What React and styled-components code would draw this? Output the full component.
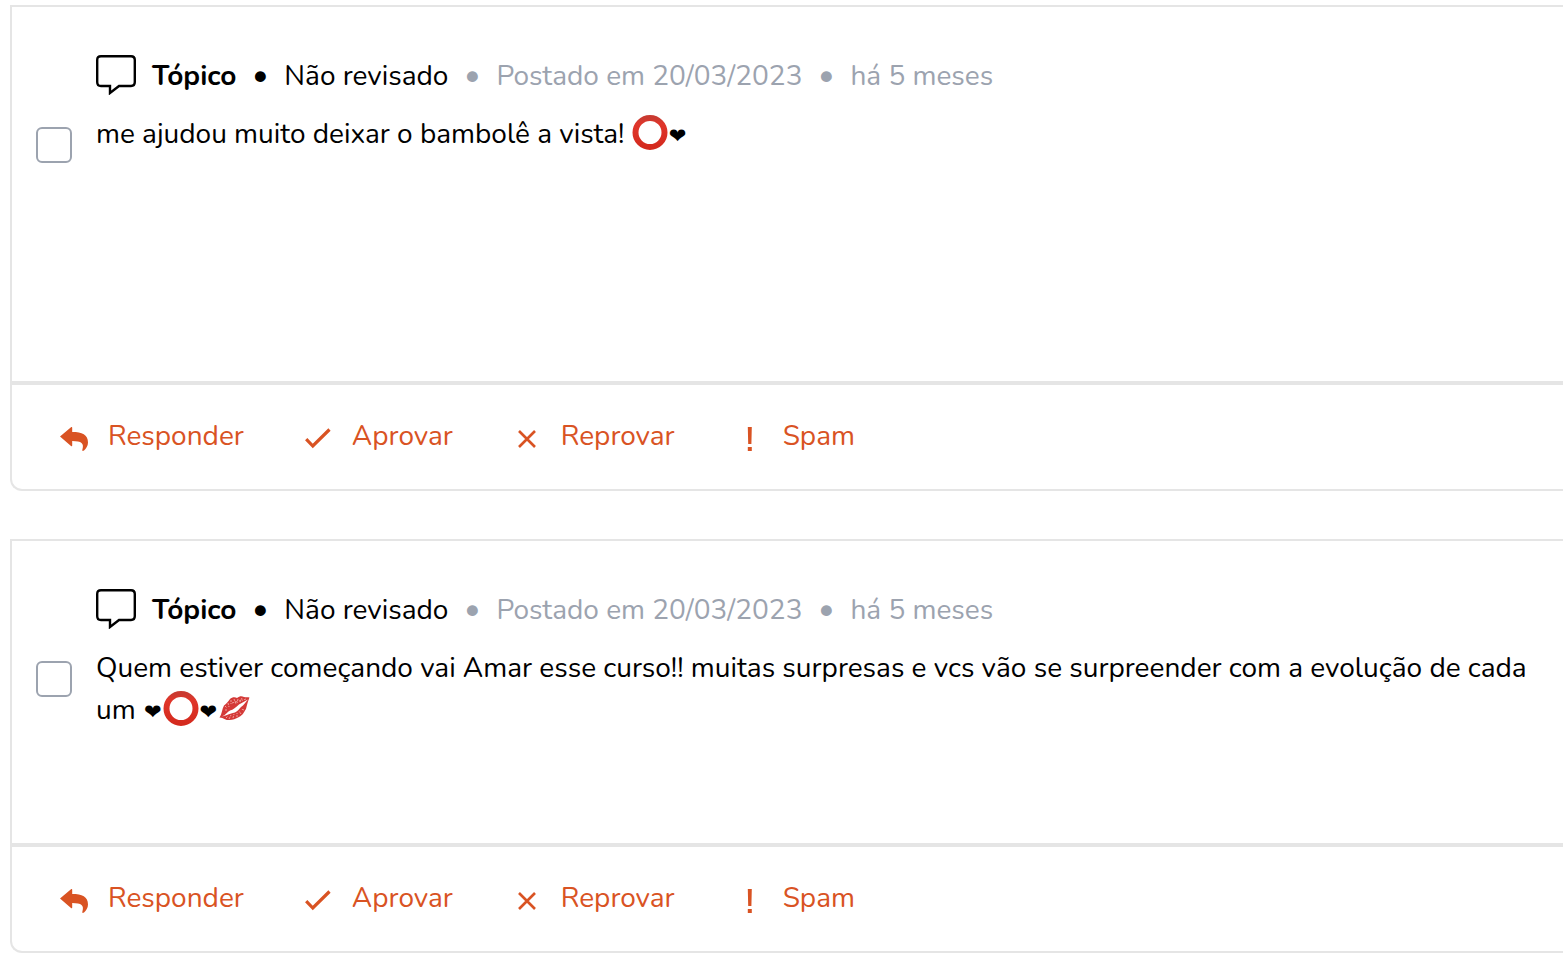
import React, { useState } from 'react';
import styled, { createGlobalStyle } from 'styled-components';

const GlobalStyle = createGlobalStyle`
  *, *::before, *::after {
    box-sizing: border-box;
  }

  body {
    margin: 0;
    background-color: #fff;
    color: #000;
    font-family: Nunito, Lato, 'Open Sans', sans-serif;
    font-size: 28px;
    line-height: 42px;
  }
`;

const List = styled.main`
  display: flex;
  flex-direction: column;
  gap: 48px;
  padding: 5px 0 9px 10px;
`;

const Card = styled.article`
  border: 2px solid #e5e5e5;
  border-right: none;
  border-bottom-left-radius: 12px;
`;

const CardBody = styled.div`
  display: flex;
  align-items: flex-start;
  gap: 24px;
  padding: 48px 24px 0;
  min-height: ${(props) => (props.$tall ? 374 : 302)}px;
`;

const Checkbox = styled.input`
  appearance: none;
  flex: none;
  width: 36px;
  height: 36px;
  margin: 72px 0 0;
  border: 2px solid #9ca3af;
  border-radius: 6px;
  background-color: #fff;
  cursor: pointer;

  &:checked {
    background-color: #d95323;
    border-color: #d95323;
  }
`;

const Content = styled.div`
  flex: 1;
  min-width: 0;
`;

const Meta = styled.div`
  display: flex;
  align-items: flex-start;
  margin-bottom: 16px;
`;

const TopicIcon = styled.svg`
  flex: none;
  width: 40px;
  height: 40px;
  margin-right: 16px;
`;

const Kind = styled.strong`
  font-weight: 700;
`;

const MetaText = styled.span`
  color: ${(props) => (props.$muted ? '#9ca3af' : '#000')};
`;

const Dot = styled.span`
  width: 48px;
  font-size: 30px;
  text-align: center;
  color: ${(props) => (props.$muted ? '#9ca3af' : '#000')};
`;

const Text = styled.p`
  margin: 0;
`;

const Heart = styled.span`
  display: inline-block;
  padding: 0 1px;
  font-family: 'DejaVu Sans', sans-serif;
  font-size: 21px;
  line-height: 24px;
`;

const Emoji = styled.svg`
  width: 36px;
  height: 36px;
  vertical-align: -8px;
`;

const Actions = styled.footer`
  display: flex;
  gap: 60px;
  padding: 30px 48px 32px;
  border-top: 4px solid #e5e5e5;
`;

const ActionButton = styled.button`
  display: flex;
  align-items: center;
  gap: 20px;
  padding: 0;
  border: none;
  background: none;
  color: #d95323;
  font: inherit;
  cursor: pointer;

  svg {
    width: 28px;
    height: 28px;
    margin-top: 6px;
  }
`;

const Ring = () => (
  <Emoji viewBox="0 0 36 36" role="img" aria-label="⭕">
    <defs>
      <linearGradient id="ring" x1="0" y1="0" x2="0" y2="1">
        <stop offset="0" stopColor="#c93a30" />
        <stop offset="0.2" stopColor="#e0362b" />
        <stop offset="1" stopColor="#d42a1e" />
      </linearGradient>
    </defs>
    <circle cx="18" cy="17.5" r="14.5" fill="none" stroke="url(#ring)" strokeWidth="6" />
  </Emoji>
);

const Kiss = () => (
  <Emoji viewBox="0 0 36 36" role="img" aria-label="💋">
    <path
      d="M1.5 26.5C4 23 4 18 6 14.5C8 13 10 11 12 8C14 6 17 5.5 19 7C22 4.5 24 5 26 6C28 6.5 30 6 31.5 6.5C30 10 29 14 28 18C26 21 25 24 21 26C17 28 14 29.5 10 29C7 29 6 27 1.5 26.5Z"
      fill="#d43a38"
    />
    <path
      d="M4 25.5C8 24 9 21 12 19.5C15 19 18 16 21 13.5C24 12 27 10 30 8.5C27 12 26 14 23 16C21 18 20 20 17 21.5C13 22.5 9 24 4 25.5Z"
      fill="#fff"
    />
    <path
      d="M7 15l2 2M10 12l1 4M13 9l0 4M16 8l2 5M20 8l-1 4M24 7l-2 4M28 8l-3 1M7 19l3 0M8 27l2-2M11 28l2-4M15 27l1-4M19 26l0-4M23 23l-2-3M26 19l-3-1M14 12l6-2M21 10l4-1"
      stroke="#f3aaa6"
      strokeWidth="0.9"
      strokeDasharray="2 1"
      fill="none"
    />
  </Emoji>
);

const ICONS = {
  reply: (
    <path
      d="M0 11.5L11 2.2C11.8 1.6 12.2 2 12.2 2.8V7C22 7 28 9.5 28 17.5C28 21 26 23.5 24 25.5C23 26.2 22 26 22.3 25C24.5 18 21.5 16.2 12.2 16V20.5C12.2 21.3 11.7 21.5 11 20.9Z"
      fill="currentColor"
    />
  ),
  check: <path d="M2.2 14.2L8.8 21L25.5 4.5" fill="none" stroke="currentColor" strokeWidth="3.2" />,
  close: <path d="M6 6L22 22M22 6L6 22" fill="none" stroke="currentColor" strokeWidth="2.6" />,
  alert: <path d="M12.8 2h4l-.4 17h-3.2zM12.8 22h4v4h-4z" fill="currentColor" />,
};

const ACTIONS = [
  { label: 'Responder', icon: 'reply' },
  { label: 'Aprovar', icon: 'check' },
  { label: 'Reprovar', icon: 'close' },
  { label: 'Spam', icon: 'alert' },
];

const Comment = ({ tall, children }) => {
  const [selected, setSelected] = useState(false);

  return (
    <Card>
      <CardBody $tall={tall}>
        <Checkbox
          type="checkbox"
          aria-label="Selecionar comentário"
          checked={selected}
          onChange={(e) => setSelected(e.target.checked)}
        />
        <Content>
          <Meta>
            <TopicIcon viewBox="0 0 40 40" fill="none" stroke="#000" strokeWidth="2.4" aria-hidden="true">
              <path d="M5 1.2H35Q38.8 1.2 38.8 5V27Q38.8 31 35 31H23L14 38V31H5Q1.2 31 1.2 27V5Q1.2 1.2 5 1.2Z" />
            </TopicIcon>
            <Kind>Tópico</Kind>
            <Dot>•</Dot>
            <MetaText>Não revisado</MetaText>
            <Dot $muted>•</Dot>
            <MetaText $muted>Postado em 20/03/2023</MetaText>
            <Dot $muted>•</Dot>
            <MetaText $muted>há 5 meses</MetaText>
          </Meta>
          <Text>{children}</Text>
        </Content>
      </CardBody>
      <Actions>
        {ACTIONS.map((action) => (
          <ActionButton key={action.label} type="button">
            <svg viewBox="0 0 28 28" aria-hidden="true">{ICONS[action.icon]}</svg>
            {action.label}
          </ActionButton>
        ))}
      </Actions>
    </Card>
  );
};

const App = () => (
  <>
    <GlobalStyle />
    <List>
      <Comment tall>
        me ajudou muito deixar o bambolê a vista! <Ring />
        <Heart>❤</Heart>
      </Comment>
      <Comment>
        Quem estiver começando vai Amar esse curso!! muitas surpresas e vcs vão se surpreender com a evolução de cada
        um <Heart>❤</Heart>
        <Ring />
        <Heart>❤</Heart>
        <Kiss />
      </Comment>
    </List>
  </>
);

export default App;
